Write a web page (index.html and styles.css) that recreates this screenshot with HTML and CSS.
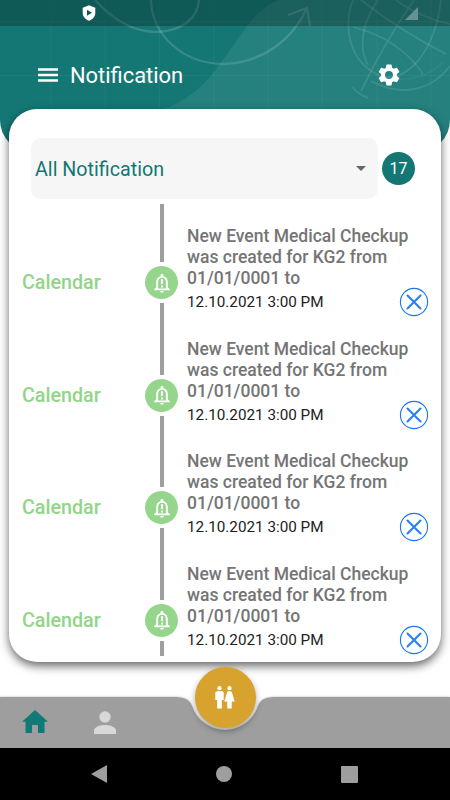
FILE: index.html
```html
<!DOCTYPE html>
<html lang="en">
<head>
<meta charset="utf-8">
<title>Notification</title>
<link rel="stylesheet" href="styles.css">
</head>
<body>
<svg class="defs" width="0" height="0" aria-hidden="true">
  <symbol id="bell" viewBox="0 0 24 24"><path fill-rule="evenodd" d="M12 22.500c1.100 0 2-.7 2-1.800h-4c0 1.100.9 1.800 2 1.800zM18.300 17v-6c0-3.200-1.700-5.700-4.700-6.400V3.700a1.600 1.600 0 0 0-3.200 0v.9C7.400 5.300 5.700 7.800 5.700 11v6L3.500 18.500V20h17v-1.500zM16.300 18H7.700v-7c0-2.600 1.500-4.700 4.300-4.700s4.300 2.100 4.300 4.700z"/><path d="M10.900 8h2.200v5h-2.200zM10.900 14.700h2.200v2.200h-2.200z"/></symbol>
  <symbol id="close" viewBox="0 0 30 30"><circle cx="15" cy="15" r="13.600" fill="none" stroke="#1877ee" stroke-width="1.100"/><path d="M8.500 8.500l13 13M21.500 8.500l-13 13" stroke="#2680f0" stroke-width="2.100" stroke-linecap="round"/></symbol>
</svg>
<div class="screen">
  <header class="header">
    <svg class="art" viewBox="0 0 450 152" fill="none">
      <path d="M164 109C186 101 203 87 217 68C228 54 239 36 251 21C260 11 268 4 279 0H450V152H164z" fill="#fff" fill-opacity=".075"/>
      <path d="M51 0V152M105 0V152M159.500 0V152M214 0V152M268 0V152M322 0V152M377 0V152M431 0V152M0 21.500H450M0 75.500H450" stroke="#fff" stroke-opacity=".045"/>
      <g stroke="#fff" stroke-opacity=".15" stroke-width="2.300">
        <path d="M95 0C113 20 134 32 157 32C181 31 198 19 199 0"/>
        <path d="M151 0C152 36 184 64 224 64C263 63 293 39 307 8M288 15L307 8L310 26"/>
      </g>
      <g stroke="#fff" stroke-opacity=".11" stroke-width="1.800">
        <path d="M353 0C347 14 347 33 352 46C357 61 369 72 383 77C410 80 435 50 441 0M378 0C359 27 360 51 368 65"/>
        <path d="M414 0C394 29 375 62 361 91M352 87Q358 94 368 98M371 81C398 96 429 93 450 66M353 27C384 35 407 50 423 74M361 0C389 22 415 38 446 54M396 0C409 10 430 20 450 24"/>
      </g>
      <path d="M383 77C410 83 430 75 443 62" stroke="#fff" stroke-opacity=".05" stroke-width="1.500"/>
      <circle cx="148" cy="76" r="8" fill="#fff" fill-opacity=".06"/>
    </svg>
    <div class="status">
      <svg class="shield" viewBox="0 0 14 16"><path d="M7 .3L13.300 2.800V8c0 3.600-2.700 6.500-6.300 7.700C3.400 14.500.7 11.600.7 8V2.800z" fill="#fff"/><path d="M5 4.800v6L10 7.800z" fill="#0f5a58"/></svg>
      <svg class="signal" viewBox="0 0 13 13"><path d="M13 0V13H0z" fill="#659391"/></svg>
    </div>
    <div class="toolbar">
      <svg class="menu" viewBox="0 0 20 14"><path d="M0 1.500H20M0 7H20M0 12.500H20" stroke="#fff" stroke-width="2.600"/></svg>
      <h1>Notification</h1>
      <svg class="gear" viewBox="2 2 20 20"><path fill="#fff" d="M19.140 12.940c.04-.3.060-.61.060-.94 0-.32-.02-.64-.07-.94l2.030-1.580a.49.49 0 0 0 .12-.61l-1.920-3.320a.488.488 0 0 0-.59-.22l-2.390.96c-.5-.38-1.030-.7-1.620-.94l-.36-2.540a.484.484 0 0 0-.48-.41h-3.840c-.24 0-.43.17-.47.41l-.36 2.540c-.59.24-1.130.57-1.620.94l-2.390-.96a.488.488 0 0 0-.59.22L2.740 8.870c-.12.21-.08.47.12.61l2.030 1.580c-.05.3-.09.63-.09.94s.02.64.07.94l-2.030 1.580a.49.49 0 0 0-.12.61l1.920 3.320c.12.22.37.29.59.22l2.390-.96c.5.38 1.030.7 1.620.94l.36 2.540c.05.24.24.41.48.41h3.840c.24 0 .44-.17.47-.41l.36-2.540c.59-.24 1.130-.56 1.620-.94l2.390.96c.22.080.47 0 .59-.22l1.920-3.320c.12-.22.070-.47-.12-.61zM12 15.600A3.600 3.600 0 1 1 12 8.400a3.600 3.600 0 0 1 0 7.200z"/></svg>
    </div>
  </header>

  <main class="card">
    <div class="filter">
      <div class="select"><span>All Notification</span><i class="caret"></i></div>
      <span class="count">17</span>
    </div>
    <ul class="list">
      <li class="item">
        <span class="kind">Calendar</span>
        <div class="rail"><i class="line upper"></i><span class="dot"><svg><use href="#bell"/></svg></span><i class="line"></i></div>
        <div class="body"><p class="title">New Event Medical Checkup<br>was created for KG2 from<br>01/01/0001 to</p><div class="foot"><time>12.10.2021 3:00 PM</time><svg class="close"><use href="#close"/></svg></div></div>
      </li>
      <li class="item">
        <span class="kind">Calendar</span>
        <div class="rail"><i class="line upper"></i><span class="dot"><svg><use href="#bell"/></svg></span><i class="line"></i></div>
        <div class="body"><p class="title">New Event Medical Checkup<br>was created for KG2 from<br>01/01/0001 to</p><div class="foot"><time>12.10.2021 3:00 PM</time><svg class="close"><use href="#close"/></svg></div></div>
      </li>
      <li class="item">
        <span class="kind">Calendar</span>
        <div class="rail"><i class="line upper"></i><span class="dot"><svg><use href="#bell"/></svg></span><i class="line"></i></div>
        <div class="body"><p class="title">New Event Medical Checkup<br>was created for KG2 from<br>01/01/0001 to</p><div class="foot"><time>12.10.2021 3:00 PM</time><svg class="close"><use href="#close"/></svg></div></div>
      </li>
      <li class="item">
        <span class="kind">Calendar</span>
        <div class="rail"><i class="line upper"></i><span class="dot"><svg><use href="#bell"/></svg></span><i class="line"></i></div>
        <div class="body"><p class="title">New Event Medical Checkup<br>was created for KG2 from<br>01/01/0001 to</p><div class="foot"><time>12.10.2021 3:00 PM</time><svg class="close"><use href="#close"/></svg></div></div>
      </li>
    </ul>
  </main>

  <nav class="tabs">
    <svg class="bar" viewBox="0 0 450 51"><path d="M0 0H172C185 0 189 2 192 9A34.700 34.700 0 0 0 258 9C261 2 265 0 278 0H450V51H0z" fill="#9e9e9e"/></svg>
    <svg class="home" viewBox="0 0 26 23"><path d="M13 0L26 11.700H22.500V23H16V15H10V23H3.500V11.700H0z" fill="#127a76"/></svg>
    <svg class="person" viewBox="0 0 22 23"><circle cx="11" cy="6" r="5.700" fill="#d8d8d8"/><path d="M0 23V19.500C0 16 6 14 11 14s11 2 11 5.500V23z" fill="#d8d8d8"/></svg>
    <button class="fab" aria-label="Students"><svg viewBox="0 0 20 23" fill="#fff"><circle cx="4.500" cy="2.200" r="2.100"/><path d="M2 5.300H7A1.700 1.700 0 0 1 8.700 7V14H6.800V22.500H2.200V14H.3V7A1.700 1.700 0 0 1 2 5.300z"/><circle cx="14.500" cy="2.200" r="2.100"/><path d="M13.500 5.300h2a1.500 1.500 0 0 1 1.400 1L19.700 15.500H16.700V22.500H12.300V15.500H9.300L12.100 6.300a1.500 1.500 0 0 1 1.400-1z"/></svg></button>
  </nav>

  <footer class="system">
    <svg class="back" viewBox="0 0 16 18"><path d="M16 0V18L0 9z"/></svg>
    <i class="round"></i>
    <i class="square"></i>
  </footer>
</div>
</body>
</html>
```
FILE: styles.css
```css
* { box-sizing: border-box; }
body { margin: 0; background: #fff; font-family: Roboto, sans-serif; }
h1, p, ul { margin: 0; padding: 0; font-weight: 400; }
svg { display: block; flex: none; }
.defs { position: absolute; }
.screen { width: 450px; height: 800px; overflow: hidden; display: flex; flex-direction: column; }

.header { position: relative; flex: none; height: 152px; background: #147773; border-radius: 0 0 32px 32px; overflow: hidden; }
.art { position: absolute; left: 0; top: 0; width: 450px; height: 152px; }
.status { position: relative; height: 26px; padding: 0 32px 0 82px; display: flex; align-items: center; justify-content: space-between; background: rgba(0, 0, 0, .25); }
.shield { width: 14px; height: 16px; }
.signal { width: 13px; height: 13px; }
.toolbar { position: relative; display: flex; align-items: center; height: 98px; padding: 0 50px 0 38px; }
.menu { width: 20px; height: 14px; }
.toolbar h1 { margin-left: 12px; padding-top: 2px; flex: 1; color: #fff; font-size: 21.900px; line-height: 26px; }
.gear { width: 22px; height: 22px; }

.card { position: relative; flex: none; width: 432px; height: 553px; margin: -43px 9px 0; padding-top: 29px; background: #fff; border-radius: 28px; box-shadow: 0 4px 10px rgba(0, 0, 0, .6); overflow: hidden; }
.filter { display: flex; align-items: center; gap: 4px; padding-left: 22px; }
.select { display: flex; align-items: center; justify-content: space-between; width: 347px; height: 61px; padding: 0 12px 0 4px; background: #f6f6f6; border-radius: 10px; color: #147773; font-size: 19.700px; }
.select span { padding-top: 2px; }
.caret { border: 5.500px solid transparent; border-top-color: #666; border-bottom: 0; }
.count { width: 33px; height: 33px; border-radius: 50%; background: #147773; color: #fff; font-size: 16px; line-height: 33px; text-align: center; }

.list { list-style: none; height: 452px; margin-top: 5px; overflow: hidden; }
.item { display: flex; height: 112.650px; }
.kind { width: 136px; padding: 67px 0 0 13px; color: #91d588; font-size: 19.700px; font-weight: 500; line-height: 24px; }
.rail { width: 33px; display: flex; flex-direction: column; align-items: center; }
.line { width: 4px; flex: 1; background: #9e9e9e; }
.line.upper { flex: none; height: 58px; }
.item:last-child .line:last-child { flex: none; height: 15px; }
.dot { display: flex; align-items: center; justify-content: center; flex: none; width: 33px; height: 33px; margin: 4px 0; border-radius: 50%; background: #96d68c; color: #fff; }
.dot svg { width: 22px; height: 22px; fill: #fff; }
.body { flex: 1; padding: 22px 12px 0 9px; }
.title { color: #757575; font-size: 17.500px; font-weight: 500; line-height: 21px; white-space: nowrap; }
.foot { display: flex; justify-content: space-between; }
.foot time { padding-top: 4px; color: #222; font-size: 15.250px; line-height: 18px; }
.close { width: 30px; height: 30px; margin-top: -2px; }

.tabs { position: relative; flex: none; display: flex; align-items: flex-start; height: 51px; margin-top: 35px; padding: 13px 22px 0; }
.bar { position: absolute; left: 0; top: 0; width: 450px; height: 51px; filter: drop-shadow(0 0 1px rgba(0, 0, 0, .3)); }
.home { position: relative; width: 26px; height: 23px; }
.person { position: relative; width: 22px; height: 23px; margin: 1px 0 0 46px; }
.fab { position: absolute; left: 194.500px; top: -30.500px; width: 61px; height: 61px; padding: 0; border: 0; border-radius: 50%; background: #d7a22e; box-shadow: 0 3px 6px rgba(0, 0, 0, .35); display: flex; align-items: center; justify-content: center; }
.fab svg { width: 20px; height: 23px; }

.system { position: relative; flex: 1; display: flex; align-items: center; justify-content: space-between; padding: 0 92px 0 91px; background: #000; }
.back { width: 16px; height: 18px; fill: #9e9e9e; }
.round { width: 16px; height: 16px; border-radius: 50%; background: #9e9e9e; }
.square { width: 17px; height: 17px; border-radius: 1px; background: #9e9e9e; }
```
